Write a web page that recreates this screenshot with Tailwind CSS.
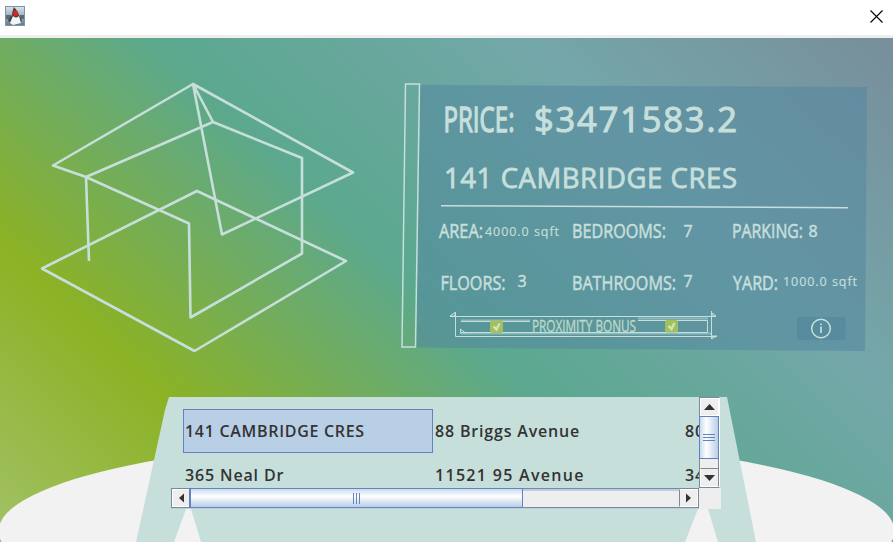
<!DOCTYPE html>
<html lang="en">
<head>
<meta charset="utf-8">
<title>Property viewer</title>
<script src="https://cdn.jsdelivr.net/npm/@tailwindcss/browser@4"></script>
</head>
<body class="w-[893px] h-[542px] overflow-hidden bg-white font-['Open_Sans','Noto_Sans',sans-serif] flex flex-col">
  <header class="h-[38px] shrink-0 flex items-start justify-between bg-white border-b-3 border-[#eeeeee] pl-[5px] pr-[10px]">
    <svg class="mt-[6px] w-5 h-5" viewBox="0 0 20 20">
      <defs><linearGradient id="ic" x2="0" y2="1"><stop stop-color="#d8e2ea"/><stop offset=".5" stop-color="#9fb0bf"/><stop offset="1" stop-color="#64798c"/></linearGradient></defs>
      <rect x=".5" y=".5" width="19" height="19" fill="url(#ic)" stroke="#8094a6"/>
      <path d="M1 9h5v4H1zM15 9h4v4h-4z" fill="#5b6975"/>
      <path d="M9 1C8 4 7 6 7 9l-4 5 1 2 10 1 3-2-3-6c-1-3-3-6-5-8z" fill="#43474c"/>
      <path d="M8 10c2 2 4 2 6 0l2 7-8 2-3-2z" fill="#f4f4f4"/>
      <ellipse cx="10.600" cy="7.500" rx="2.300" ry="2.900" fill="#e3231b"/>
    </svg>
    <svg class="mt-[10px] w-[13px] h-[13px]" viewBox="0 0 13 13"><path d="M.5 .5l12 12M12.500 .5l-12 12" stroke="#000" stroke-width="1.100"/></svg>
  </header>

  <main class="relative h-[504px] w-[893px]">
    <svg class="block w-[893px] h-[504px]" viewBox="0 38 893 504">
      <defs>
        <linearGradient id="bg" gradientUnits="userSpaceOnUse" x1="-295.6" y1="311.2" x2="404.5" y2="-425.8">
          <stop offset="0" stop-color="#a5c472"/><stop offset=".25" stop-color="#8cb224"/><stop offset=".5" stop-color="#5ba88f"/><stop offset=".75" stop-color="#74a7a9"/><stop offset="1" stop-color="#788e9b"/>
        </linearGradient>
      </defs>
      <rect y="38" width="893" height="504" fill="url(#bg)"/>
      <ellipse cx="446.500" cy="531" rx="448" ry="93" fill="#f2f2f2"/>
      <path d="M169 397H727L756 542H718L708 509H698L685 542H201L191 509H186L174 542H136L165 410Z" fill="#c6dfdb"/>

      <!-- House wireframe -->
      <g fill="none" stroke="#c6dfdb" stroke-width="2.600" stroke-linejoin="round">
        <path d="M193 84L53 165.500L86 177L189 223.500L190.500 317.500L302 253.500V158L213 122L86 177L89 261"/>
        <path d="M213 122L193 84L353 172.500L222 234.500L193 84"/>
        <path d="M197 191L42 268.500L194.500 351L346 261Z"/>
      </g>

      <!-- Information panel -->
      <path d="M420 85L867 87L865 351L416 347.500Z" fill="#5487a0" fill-opacity=".55"/>
      <path d="M405.500 84H419.500L415.500 347H402Z" fill="none" stroke="#c6dfdb" stroke-width="1.500"/>
      <path d="M441 205.700L848 207.700" stroke="#c6dfdb" stroke-width="1.500"/>
      <g fill="#c6dfdb" stroke="#c6dfdb">
        <text x="443.500" y="132" font-size="35" stroke-width="1.400" textLength="71" lengthAdjust="spacingAndGlyphs">PRICE:</text>
        <g stroke-width=".55">
          <text x="439" y="237.700" font-size="19.500" textLength="44" lengthAdjust="spacingAndGlyphs">AREA:</text>
          <text x="572" y="237.700" font-size="19.500" textLength="94" lengthAdjust="spacingAndGlyphs">BEDROOMS:</text>
          <text x="732" y="237.700" font-size="19.500" textLength="71" lengthAdjust="spacingAndGlyphs">PARKING:</text>
          <text x="440.500" y="289.700" font-size="19.500" textLength="65" lengthAdjust="spacingAndGlyphs">FLOORS:</text>
          <text x="572" y="289.700" font-size="19.500" textLength="104" lengthAdjust="spacingAndGlyphs">BATHROOMS:</text>
          <text x="733" y="289.700" font-size="19.500" textLength="45" lengthAdjust="spacingAndGlyphs">YARD:</text>
        </g>
        <text x="534" y="131.500" font-size="34.500" stroke-width="1.100" textLength="203">$3471583.2</text>
        <text x="444" y="188" font-size="27.500" stroke-width=".8" textLength="293">141 CAMBRIDGE CRES</text>
        <g font-size="16" stroke-width=".5">
          <text x="683.500" y="237">7</text>
          <text x="808.500" y="237">8</text>
          <text x="517.500" y="287">3</text>
          <text x="683.500" y="287">7</text>
        </g>
        <g font-size="12.500" stroke-width=".15">
          <text x="485" y="236" textLength="74">4000.0 sqft</text>
          <text x="783" y="286" textLength="74">1000.0 sqft</text>
        </g>
      </g>

      <!-- Proximity bonus -->
      <g fill="none" stroke="#c6dfdb" stroke-width="1">
        <path d="M450 316.500H716M455.500 312V336.500H717M711.500 311V339"/>
        <path d="M450 316L455 312.500V316ZM712 313L716 316H712ZM712 336H717L712 338.500Z"/>
        <path d="M461 321.500H530M638 320.500H707.500V332.500H460.500V329L466 333.500" />
        <path d="M461 320.500H530M638 318.500H708M460 333.500H712" stroke-opacity=".5" stroke-width="2"/>
      </g>
      <g fill="#a2c05b"><rect x="490" y="320.500" width="13" height="12.500" rx="2"/><rect x="665" y="320" width="13" height="12.500" rx="2"/></g>
      <path d="M493.500 326.500L496.500 329.500L499.500 323.500M668.500 326L671.500 329L674.500 323" fill="none" stroke="#cfe2bd" stroke-width="2.500"/>
      <text x="532" y="331.500" font-size="16.500" fill="#bdd8c8" stroke="#bdd8c8" stroke-width=".35" textLength="104" lengthAdjust="spacingAndGlyphs">PROXIMITY BONUS</text>

      <rect x="797" y="317" width="48.500" height="23" rx="3" fill="#568c9d"/>
      <circle cx="821" cy="328.500" r="9.300" fill="none" stroke="#c6dfdb" stroke-width="1.500"/>
      <path d="M821 326.500V333M821 323.500V325" stroke="#c6dfdb" stroke-width="1.700"/>
    </svg>

    <!-- Property list placed over the podium -->
    <section class="absolute left-[171px] top-[359px] w-[550px] h-[112px] grid grid-cols-[528px_22px] grid-rows-[91px_21px]">
      <div class="overflow-hidden pl-3 pt-3 bg-[#c6dfdb]">
        <div class="w-[750px] grid grid-cols-3 auto-rows-[44px] font-semibold text-[16px] text-[#333333] whitespace-nowrap">
          <div class="flex items-center pl-px border border-[#6382bf] bg-[#b8cfe5] tracking-[0.7px]">141 CAMBRIDGE CRES</div>
          <div class="flex items-center pl-0.5 tracking-[0.82px]">88 Briggs Avenue</div>
          <div class="flex items-center pl-0.5 tracking-[0.8px]">80</div>
          <div class="flex items-center pl-0.5 tracking-[0.85px]">365 Neal Dr</div>
          <div class="flex items-center pl-0.5 tracking-[1.3px]">11521 95 Avenue</div>
          <div class="flex items-center pl-0.5 tracking-[0.8px]">34</div>
        </div>
      </div>
      <div class="w-[21px] h-[91px] flex flex-col border border-[#7a8a99] border-r-white bg-[#eeeeee]">
        <div class="h-[18px] flex items-center justify-center border border-white"><svg class="w-[11px] h-[6px]" viewBox="0 0 11 6"><path d="M5.500 0L11 6H0Z" fill="#333"/></svg></div>
        <div class="h-[43px] -ml-px border border-[#6382bf] bg-linear-to-r from-[#c8daeb] via-white via-35% to-[#b8cfe5] flex flex-col items-center justify-center gap-[2px]">
          <i class="w-3 h-px bg-[#6382bf]"></i><i class="w-3 h-px bg-[#6382bf]"></i><i class="w-3 h-px bg-[#6382bf]"></i>
        </div>
        <div class="h-[9px] border-r border-[#7a8a99]"></div>
        <div class="h-[19px] flex items-center justify-center border border-white border-t-[#7a8a99] border-r-[#7a8a99]"><svg class="w-[11px] h-[6px]" viewBox="0 0 11 6"><path d="M0 0H11L5.500 6Z" fill="#333"/></svg></div>
      </div>
      <div class="h-5 flex border border-[#7a8a99] bg-[#eeeeee] shadow-[0_1px_0_#b8cfe5]">
        <div class="w-[17px] flex items-center justify-center border border-white border-r-0"><svg class="w-[5px] h-[10px]" viewBox="0 0 6 11"><path d="M6 0V11L0 5.500Z" fill="#333"/></svg></div>
        <div class="w-[334px] -my-px border border-l-2 border-[#6382bf] bg-linear-to-b from-[#c8daeb] via-white via-40% to-[#b8cfe5] flex items-center justify-center gap-[2px]">
          <i class="h-[11px] w-px bg-[#6382bf]"></i><i class="h-[11px] w-px bg-[#6382bf]"></i><i class="h-[11px] w-px bg-[#6382bf]"></i>
        </div>
        <div class="w-[156px] border-t-2 border-[#b8cfe5]"></div>
        <div class="w-[19px] flex items-center justify-center border border-white border-l-[#7a8a99]"><svg class="w-[5px] h-[10px]" viewBox="0 0 6 11"><path d="M0 0V11L6 5.500Z" fill="#333"/></svg></div>
      </div>
      <div class="bg-[#eeeeee]"></div>
    </section>
  </main>
</body>
</html>
